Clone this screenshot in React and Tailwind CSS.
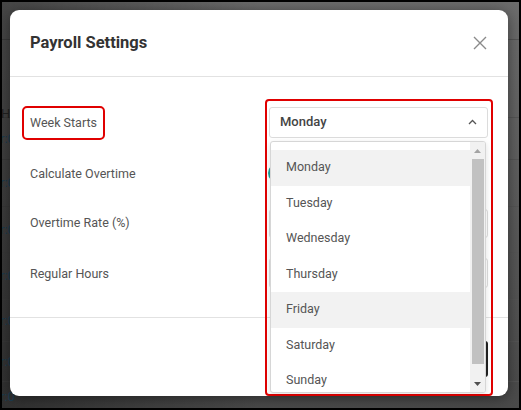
import React from "react";

const days = ["Monday", "Tuesday", "Wednesday", "Thursday", "Friday", "Saturday", "Sunday"];

export default function App() {
  const bgRows = [38, 78, 42, 47, 46, 47, 42, 40, 30];
  return (
    <div className="w-[521px] h-[410px] border-2 border-black bg-[#111] overflow-hidden" style={{ fontFamily: "Roboto, 'Liberation Sans', sans-serif" }}>
      <div className="relative w-full h-full bg-gradient-to-b from-[#6c6c6c] to-[#4a4a4a] overflow-hidden">
        {/* page content behind overlay */}
        <div className="flex flex-col">
          {bgRows.map((h, i) => (
            <div key={i} className="border-b border-[#555] flex items-center" style={{ height: h }}>
              {i >= 2 && <span className="text-[13px] text-[#2a5b7a] -ml-[2px]">r:0</span>}
              {i === 1 && <span className="text-[13px] text-[#333] mt-[70px] -ml-[1px]">H</span>}
            </div>
          ))}
        </div>
        <div className="absolute inset-0 bg-gradient-to-r from-[rgba(0,0,0,0.35)] via-transparent to-transparent" />

        {/* modal */}
        <div className="absolute left-[8px] top-[8px] w-[498px] h-[386px] bg-white rounded-[9px] shadow-[0_2px_14px_rgba(0,0,0,0.45)] flex flex-col">
          <div className="h-[67px] border-b border-[#e2e2e2] flex items-center justify-between pl-5 pr-[20px] shrink-0">
            <span className="text-[16.5px] font-bold text-[#333] mt-[1px]">Payroll Settings</span>
            <svg width="14" height="14" viewBox="0 0 14 14" className="mr-[1px]">
              <path d="M1 1 L13 13 M13 1 L1 13" stroke="#8a8a8a" strokeWidth="1.4" fill="none" />
            </svg>
          </div>
          <div className="flex flex-col pt-[21px] pb-[19px] px-5 border-b border-[#e2e2e2]">
            <div className="h-[50px] flex items-center justify-between">
              <div className="-ml-2 border-2 border-[#e00000] rounded-[5px] px-[6px] h-[34px] flex items-center">
                <span className="text-[12.5px] text-[#555] mt-[1px]">Week Starts</span>
              </div>
              <div className="w-[219px] h-[31px] border border-[#dcdcdc] rounded-[3px] flex items-center justify-between pl-[10px] pr-[10px] mt-[-2px]">
                <span className="text-[13px] font-medium text-[#444]">Monday</span>
                <svg width="9" height="6" viewBox="0 0 9 6">
                  <path d="M1 5 L4.5 1.5 L8 5" stroke="#555" strokeWidth="1.3" fill="none" />
                </svg>
              </div>
            </div>
            <div className="h-[50px] flex items-center justify-between">
              <span className="text-[12.5px] text-[#555] mt-[2px]">Calculate Overtime</span>
              <div className="w-[219px] flex items-center">
                <div className="w-[36px] h-[20px] rounded-full bg-[#1aa39a] -ml-[1px]" />
              </div>
            </div>
            <div className="h-[50px] flex items-center justify-between">
              <span className="text-[12.5px] text-[#555] mt-[1px]">Overtime Rate (%)</span>
              <div className="w-[219px] h-[29px] border border-[#dcdcdc] rounded-[3px]" />
            </div>
            <div className="h-[50px] flex items-center justify-between">
              <span className="text-[12.5px] text-[#555] mt-[2px]">Regular Hours</span>
              <div className="w-[219px] h-[30px] border border-[#dcdcdc] rounded-[3px]" />
            </div>
          </div>
          <div className="flex-1 flex items-center justify-end px-5">
            <div className="w-[80px] h-[36px] rounded-[3px] bg-[#222] mt-[4px]" />
          </div>
        </div>

        {/* red highlight around select */}
        <div className="absolute left-[263px] top-[97px] w-[228px] h-[297px] border-2 border-[#e00000] rounded-[4px] pointer-events-none" />

        {/* dropdown menu */}
        <div className="absolute left-[268px] top-[139px] w-[216px] h-[252px] bg-white border border-[#d6d6d6] rounded-[3px] shadow-[0_2px_6px_rgba(0,0,0,0.12)] flex overflow-hidden">
          <div className="flex-1 flex flex-col pt-[8px]">
            {days.map((d) => (
              <div
                key={d}
                className={`h-[35.5px] shrink-0 flex items-center pl-[15px] text-[12.5px] text-[#555] ${d === "Monday" || d === "Friday" ? "bg-[#f2f2f2]" : ""}`}
              >
                {d}
              </div>
            ))}
          </div>
          <div className="w-[15px] bg-[#f1f1f1] flex flex-col items-center">
            <div className="h-[17px] flex items-center justify-center">
              <svg width="7" height="4" viewBox="0 0 7 4"><path d="M0 4 L3.5 0 L7 4 Z" fill="#a3a3a3" /></svg>
            </div>
            <div className="w-[12px] h-[205px] bg-[#c1c1c1]" />
            <div className="flex-1 flex items-end justify-center pb-[6px]">
              <svg width="7" height="4" viewBox="0 0 7 4"><path d="M0 0 L3.5 4 L7 0 Z" fill="#505050" /></svg>
            </div>
          </div>
        </div>
      </div>
    </div>
  );
}
